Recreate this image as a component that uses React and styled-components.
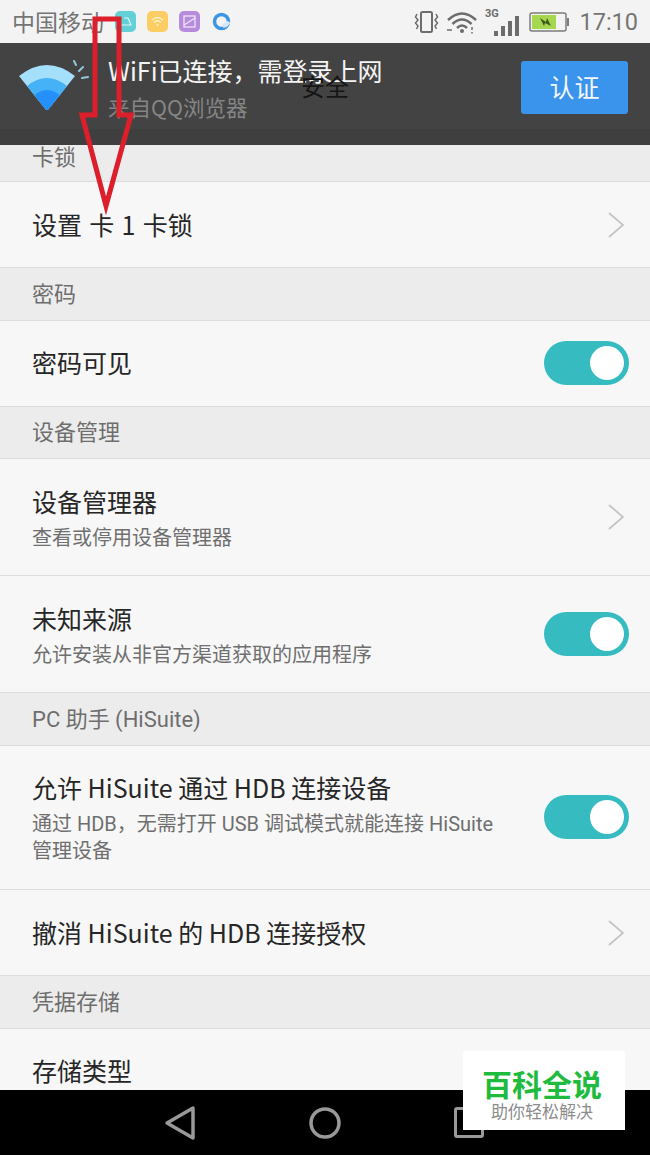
import React from "react";
import styled, { createGlobalStyle } from "styled-components";

const GlobalStyle = createGlobalStyle`
  html, body {
    margin: 0;
    padding: 0;
    background: #f7f7f7;
  }
  * {
    box-sizing: border-box;
  }
`;

const FONT = `"Noto Sans CJK SC", "Noto Sans", sans-serif`;
const LATIN_FONT = `Roboto, "Noto Sans CJK SC", sans-serif`;

/* ================= layout ================= */
const Phone = styled.div`
  position: relative;
  width: 650px;
  height: 1155px;
  display: flex;
  flex-direction: column;
  overflow: hidden;
  font-family: ${FONT};
  background: #f7f7f7;
`;

const StatusBar = styled.div`
  height: 43px;
  flex: none;
  display: flex;
  align-items: center;
  padding: 0 12px;
  background: #f3f3f3;
  color: #757575;
`;

const Carrier = styled.span`
  font-size: 23px;
  line-height: 43px;
  width: 103px;
`;

const AppIcons = styled.div`
  display: flex;
  align-items: center;
  gap: 11px;
`;

const AppIcon = styled.div`
  width: 21px;
  height: 21px;
  border-radius: 5px;
  background: ${(p) => p.$bg};
  display: flex;
  align-items: center;
  justify-content: center;
`;

const StatusRight = styled.div`
  margin-left: auto;
  display: flex;
  align-items: center;
  gap: 8px;
`;

const Clock = styled.span`
  font-family: Roboto, sans-serif;
  font-size: 23.500px;
  margin-left: 1px;
`;

const Banner = styled.div`
  height: 102px;
  flex: none;
  display: flex;
  align-items: flex-start;
  padding: 17px 22px 0 19px;
  background: #434343;
  box-shadow: inset 0 -16px 0 #3f3f3f;
`;

const BannerText = styled.div`
  margin-left: 19px;
  flex: 1;
`;

const BannerTitle = styled.div`
  font-size: 25px;
  line-height: 24px;
  margin-top: -2px;
  color: #f4f4f4;
`;

const BannerSub = styled.div`
  font-size: 21.500px;
  line-height: 24px;
  margin-top: 13px;
  color: #858585;
`;

const AuthButton = styled.div`
  width: 107px;
  height: 53px;
  margin-top: 1px;
  padding-bottom: 3px;
  border-radius: 3px;
  background: #3a94ec;
  color: #f2f7fc;
  font-size: 25px;
  display: flex;
  align-items: center;
  justify-content: center;
`;

const PageTitle = styled.div`
  position: absolute;
  left: 301px;
  top: 72px;
  font-size: 24px;
  line-height: 28px;
  color: #151515;
`;

const List = styled.div`
  flex: 1;
  min-height: 0;
  overflow: hidden;
`;

const SectionHeader = styled.div`
  height: ${(p) => p.$height || 52.5}px;
  padding: ${(p) => (p.$clipped ? "0" : "13.500px")} 32px 0;
  border-bottom: 1px solid #dcdcdc;
  background: #ececec;
  color: #6e6e6e;
  font-family: ${LATIN_FONT};
  font-size: 22px;
  line-height: 26px;
`;

const Row = styled.div`
  height: ${(p) => p.$height}px;
  display: flex;
  align-items: center;
  padding: 0 21px 0 32px;
  border-bottom: 1px solid #dcdcdc;
  background: #f7f7f7;
`;

const RowText = styled.div`
  flex: 1;
  min-width: 0;
  padding-bottom: 2px;
`;

const RowTitle = styled.div`
  font-size: 25px;
  line-height: 32px;
  color: #262626;
  word-spacing: ${(p) => (p.$wide ? "1.700px" : "0")};
`;

const RowSub = styled.div`
  margin-top: 8px;
  margin-bottom: -4px;
  max-width: 470px;
  font-family: ${LATIN_FONT};
  font-size: 20px;
  line-height: 27px;
  color: #6f6f6f;
`;

const Toggle = styled.div`
  flex: none;
  width: 85px;
  height: 44px;
  padding: 5px;
  border-radius: 22px;
  background: #36bcc0;
  display: flex;
  justify-content: flex-end;
`;

const ToggleKnob = styled.div`
  width: 34px;
  height: 34px;
  border-radius: 50%;
  background: #ffffff;
`;

const Chevron = styled.svg`
  flex: none;
  width: 16px;
  height: 28px;
  margin-right: 5px;
`;

const NavBar = styled.div`
  height: 65px;
  flex: none;
  display: grid;
  grid-template-columns: 145px 145px 32px;
  align-items: center;
  padding-left: 164px;
  background: #000000;
`;

const Arrow = styled.svg`
  position: absolute;
  left: 0;
  top: 0;
  width: 150px;
  height: 220px;
  pointer-events: none;
`;

const Watermark = styled.div`
  position: absolute;
  left: 463px;
  top: 1051px;
  width: 162px;
  height: 79px;
  padding: 15px 4px 0 0;
  background: #ffffff;
  text-align: center;
`;

const WatermarkTitle = styled.div`
  font-size: 30px;
  line-height: 35px;
  font-weight: 700;
  color: #1fbb3e;
`;

const WatermarkSub = styled.div`
  font-size: 17px;
  line-height: 20px;
  color: #8c8c8c;
`;

/* ================= icons ================= */
const WifiLogo = () => (
  <svg width="70" height="50" viewBox="0 0 70 50" style={{ flex: "none" }}>
    <path d="M0 16 Q28 -6 56 16 L28 51 Z" fill="#a4e0fb" />
    <path d="M8 26 Q28 10 48 26 L28 51 Z" fill="#45b1f7" />
    <path d="M15.500 35 Q28 25 40.500 35 L28 51 Z" fill="#2491fa" />
    <path d="M55 -1 L57 3 M64 5 L60 9 M69 15 L63 16" stroke="#8fc9d8" strokeWidth="2" strokeLinecap="round" transform="translate(0 2)" />
  </svg>
);

const VibrateIcon = () => (
  <svg width="25" height="24" viewBox="0 0 25 24" fill="none" stroke="#6c6c6c" strokeWidth="2">
    <rect x="7" y="2" width="11" height="20" rx="1.500" />
    <path d="M3 4 L1.500 7 L4 10 L1.500 13 L4 16 L2.500 19" strokeWidth="1.500" />
    <path d="M22 4 L23.500 7 L21 10 L23.500 13 L21 16 L22.500 19" strokeWidth="1.500" />
  </svg>
);

const WifiStatusIcon = () => (
  <svg width="30" height="24" viewBox="0 0 30 24" fill="none" stroke="#6c6c6c" strokeWidth="2.500">
    <path d="M1 10 Q15 -3 29 10" />
    <path d="M5.500 14 Q15 5 24.500 14" />
    <path d="M10 18 Q15 13 20 18" />
    <circle cx="15" cy="21" r="2" fill="#6c6c6c" stroke="none" />
    <path d="M0 20 H5 M25 17 V20 M25 22 V23.500" strokeWidth="1.500" />
  </svg>
);

const SignalIcon = () => (
  <svg width="36" height="30" viewBox="0 0 36 30">
    <text x="0" y="10" fontSize="11" fontWeight="700" fontFamily="Roboto, sans-serif" fill="#6c6c6c">3G</text>
    <rect x="9" y="24" width="4" height="5" fill="#6c6c6c" />
    <rect x="16" y="19" width="4" height="10" fill="#6c6c6c" />
    <rect x="23" y="14" width="4" height="15" fill="#6c6c6c" />
    <rect x="30" y="9" width="4" height="20" fill="#6c6c6c" />
  </svg>
);

const BatteryIcon = () => (
  <svg width="41" height="20" viewBox="0 0 41 20">
    <rect x="1" y="1" width="36" height="18" rx="2" fill="#f3f3f3" stroke="#7c7c7c" strokeWidth="1.500" />
    <rect x="3" y="3" width="24" height="14" fill="#a5d84f" />
    <rect x="38" y="6" width="2" height="8" fill="#7c7c7c" />
    <path d="M11 6 L17 10 L18 6 L22 14 L16 11 L15 14 Z" fill="#3c5a22" />
  </svg>
);

const ChevronIcon = () => (
  <Chevron viewBox="0 0 16 28" fill="none" stroke="#c4c4c4" strokeWidth="1.800">
    <path d="M1 2 L15 14 L1 26" />
  </Chevron>
);

/* ================= data ================= */
const sections = [
  {
    header: "卡锁",
    height: 37,
    clipped: true,
    rows: [{ title: "设置 卡 1 卡锁", height: 86, action: "chevron", wide: true }],
  },
  {
    header: "密码",
    rows: [{ title: "密码可见", height: 86, action: "toggle" }],
  },
  {
    header: "设备管理",
    rows: [
      { title: "设备管理器", sub: "查看或停用设备管理器", height: 117, action: "chevron" },
      { title: "未知来源", sub: "允许安装从非官方渠道获取的应用程序", height: 117, action: "toggle" },
    ],
  },
  {
    header: "PC 助手 (HiSuite)",
    rows: [
      {
        title: "允许 HiSuite 通过 HDB 连接设备",
        sub: "通过 HDB，无需打开 USB 调试模式就能连接 HiSuite 管理设备",
        height: 144.5,
        action: "toggle",
      },
      { title: "撤消 HiSuite 的 HDB 连接授权", height: 86, action: "chevron" },
    ],
  },
  {
    header: "凭据存储",
    rows: [{ title: "存储类型", height: 86 }],
  },
];

/* ================= App ================= */
const App = () => {
  return (
    <Phone>
      <GlobalStyle />
      <StatusBar>
        <Carrier>中国移动</Carrier>
        <AppIcons>
          <AppIcon $bg="#63cfd6">
            <svg width="13" height="9" viewBox="0 0 13 9" fill="none" stroke="#e4f7f8" strokeWidth="1.200">
              <path d="M1 8 H12 L9 1 H5" />
            </svg>
          </AppIcon>
          <AppIcon $bg="#fbcd63">
            <svg width="13" height="11" viewBox="0 0 13 11" fill="none" stroke="#fff3cf" strokeWidth="1.200">
              <path d="M1 4 Q6.500 -1 12 4 M3 6.500 Q6.500 3 10 6.500" />
              <circle cx="6.500" cy="9" r="1" fill="#fff3cf" stroke="none" />
            </svg>
          </AppIcon>
          <AppIcon $bg="#b68bdc">
            <svg width="13" height="13" viewBox="0 0 13 13" fill="none" stroke="#f3e9fb" strokeWidth="1.200">
              <rect x="1" y="1" width="11" height="11" />
              <path d="M1 10 L12 3" />
            </svg>
          </AppIcon>
          <svg width="21" height="21" viewBox="0 0 21 21" fill="none">
            <circle cx="10.500" cy="10.500" r="7" stroke="#3d95e6" strokeWidth="3.500" />
            <path d="M12 15 A7 7 0 0 0 17.500 10.500" stroke="#d4e8f8" strokeWidth="4" />
          </svg>
        </AppIcons>
        <StatusRight>
          <VibrateIcon />
          <WifiStatusIcon />
          <SignalIcon />
          <BatteryIcon />
          <Clock>17:10</Clock>
        </StatusRight>
      </StatusBar>

      <Banner>
        <WifiLogo />
        <BannerText>
          <BannerTitle>WiFi已连接，需登录上网</BannerTitle>
          <BannerSub>来自QQ浏览器</BannerSub>
        </BannerText>
        <AuthButton>认证</AuthButton>
      </Banner>

      <List>
        {sections.map((section) => (
          <React.Fragment key={section.header}>
            <SectionHeader $height={section.height} $clipped={section.clipped}>
              {section.header}
            </SectionHeader>
            {section.rows.map((row) => (
              <Row key={row.title} $height={row.height}>
                <RowText>
                  <RowTitle $wide={row.wide}>{row.title}</RowTitle>
                  {row.sub && <RowSub>{row.sub}</RowSub>}
                </RowText>
                {row.action === "chevron" && <ChevronIcon />}
                {row.action === "toggle" && (
                  <Toggle>
                    <ToggleKnob />
                  </Toggle>
                )}
              </Row>
            ))}
          </React.Fragment>
        ))}
      </List>

      <NavBar>
        <svg width="34" height="36" viewBox="0 0 34 36" fill="none" stroke="#999999" strokeWidth="3.500" strokeLinejoin="round">
          <path d="M29 3 V33 L3 18 Z" />
        </svg>
        <svg width="32" height="32" viewBox="0 0 32 32" fill="none" stroke="#999999" strokeWidth="3.500">
          <circle cx="16" cy="16" r="14" />
        </svg>
        <svg width="30" height="31" viewBox="0 0 30 31" fill="none" stroke="#999999" strokeWidth="3">
          <rect x="1.500" y="1.500" width="27" height="28" rx="1.500" />
        </svg>
      </NavBar>

      <PageTitle>安全</PageTitle>

      <Arrow viewBox="0 0 150 220" fill="none" stroke="#dc1f2b" strokeWidth="5" strokeLinejoin="miter">
        <path d="M95 19 H119 V115 H131 L106 206 L82 115 H95 Z" />
      </Arrow>

      <Watermark>
        <WatermarkTitle>百科全说</WatermarkTitle>
        <WatermarkSub>助你轻松解决</WatermarkSub>
      </Watermark>
    </Phone>
  );
};

export default App;
